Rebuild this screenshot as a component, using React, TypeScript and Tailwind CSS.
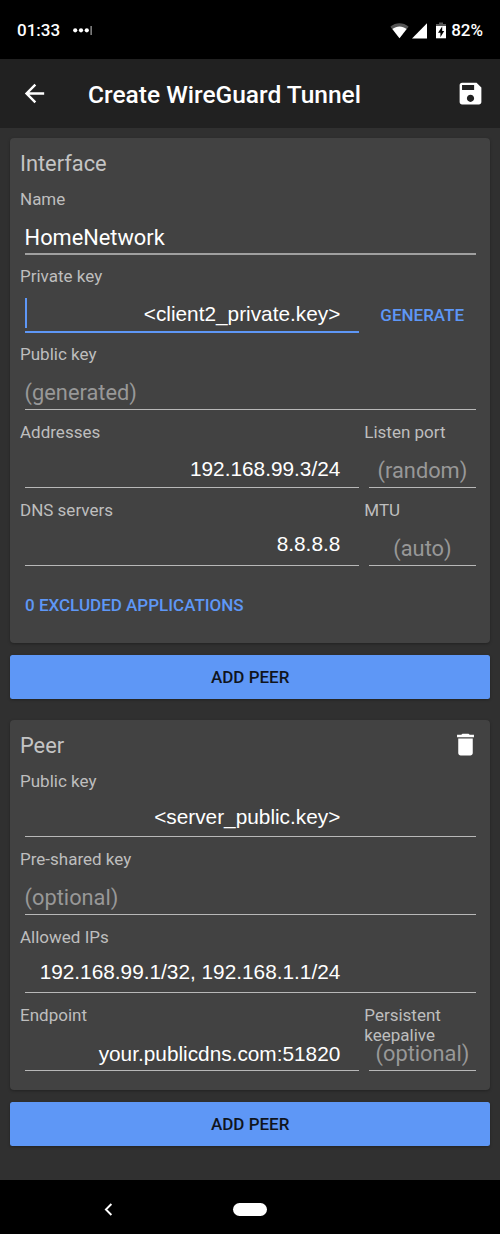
import type { ReactNode } from 'react';

type FieldProps = {
  label: string;
  value?: string;
  hint?: string;
  // Tailwind classes that place the text inside the input box
  text?: string;
  className?: string;
  // Tailwind classes of the underline
  line?: string;
  focused?: boolean;
};

function Field({
  label,
  value,
  hint,
  text = '',
  className = 'w-full',
  line = 'h-[46px] border-b border-[#b8b8b8]',
  focused = false,
}: FieldProps) {
  return (
    <div className={`h-[77.8px] shrink-0 ${className}`}>
      <div className="h-5 text-[17px] leading-5 text-[#bebebe]">{label}</div>
      <div className={`relative mr-[4.5px] ml-[4.6px] flex items-end leading-[26px] whitespace-pre ${line}`}>
        {focused && <span className="absolute bottom-[3px] left-0 h-[30px] w-[2.5px] bg-[#5e97f6]" />}
        <span className={`w-full ${hint ? 'text-[21.8px] text-[#989898]' : 'text-white'} ${text}`}>{value ?? hint}</span>
      </div>
    </div>
  );
}

const typed = "font-['Liberation_Sans',sans-serif] text-[20.8px] text-right";

function Card({ children, className }: { children: ReactNode; className: string }) {
  return (
    <section className={`mx-[10px] rounded-[4px] bg-[#424242] px-[10px] shadow-[0_1px_3px_rgba(0,0,0,0.3)] ${className}`}>
      {children}
    </section>
  );
}

function AddPeer({ className }: { className: string }) {
  return (
    <button
      className={`mx-[10px] block h-[44px] w-[480.4px] shrink-0 rounded-[2.5px] bg-[#5e97f6] pt-[2px] text-center text-[17px] font-medium text-[#10151d] shadow-[0_1px_3px_rgba(0,0,0,0.3)] ${className}`}
    >
      ADD PEER
    </button>
  );
}

export default function App() {
  return (
    <div className="flex h-[1234px] w-[500px] flex-col overflow-hidden bg-[#303030] font-[Roboto,sans-serif]">
      <div className="flex h-[59px] shrink-0 items-center bg-black pt-[2px] pr-[17px] pl-[17px] text-[17px] font-medium text-white">
        <span>01:33</span>
        <svg className="ml-[13px]" width="20" height="12" viewBox="0 0 20 12" fill="#fff">
          <circle cx="2.2" cy="5.3" r="2.1" />
          <circle cx="8" cy="5.3" r="2.1" />
          <circle cx="13.8" cy="5.3" r="2.1" />
          <path d="M17.6 1h1v9h-1z" opacity=".8" />
        </svg>
        <div className="ml-auto flex items-center">
          <svg width="19" height="16" viewBox="0 0 19 16">
            <path d="M.4 3.8C5.8-.8 13.2-.8 18.6 3.8L9.5 15.2z" fill="#555" />
            <path d="M2.4 6.1c4.2-3.6 10-3.6 14.2 0L9.5 15.2z" fill="#fff" />
          </svg>
          <svg className="ml-[3px]" width="15" height="16" viewBox="0 0 15 16">
            <path d="M15 .3v15.2H0z" fill="#fff" />
          </svg>
          <svg className="ml-[9px]" width="10" height="17" viewBox="0 0 10 17">
            <path d="M3 .5h4v1.6h3V5H0V2.1h3z" fill="#555" />
            <path d="M0 4h10v12.3H0z" fill="#fff" />
            <path d="M6.2 4.6 2 10.7h2.4v4.6L8.2 9H6.2z" fill="#000" />
          </svg>
          <span className="ml-[5px]">82%</span>
        </div>
      </div>

      <header className="flex h-[68.5px] shrink-0 items-center bg-[#212121] pr-[15px] pl-[20px] text-white">
        <svg width="29" height="29" viewBox="0 0 24 24" fill="currentColor">
          <path d="M20 11H7.83l5.59-5.59L12 4l-8 8 8 8 1.41-1.41L7.83 13H20v-2z" />
        </svg>
        <h1 className="ml-[39px] pt-[4px] text-[24.5px] font-medium whitespace-nowrap">Create WireGuard Tunnel</h1>
        <svg className="ml-auto" width="29" height="29" viewBox="0 0 24 24" fill="currentColor">
          <path d="M17 3H5c-1.11 0-2 .9-2 2v14c0 1.1.89 2 2 2h14c1.1 0 2-.9 2-2V7l-4-4zm-5 16c-1.66 0-3-1.34-3-3s1.34-3 3-3 3 1.34 3 3-1.34 3-3 3zm3-10H5V5h10v4z" />
        </svg>
      </header>

      <main className="flex h-[1052.5px] shrink-0 flex-col">
        <Card className="mt-[10px] h-[505.5px] shrink-0 pt-[12px]">
          <h2 className="h-[39.1px] pt-px text-[21.8px] leading-[26px] text-[#c4c4c4]">Interface</h2>
          <Field
            label="Name"
            value="HomeNetwork"
            text="text-[21.8px] pb-[2px]"
            line="h-[46px] border-b-2 border-[#a0a0a0]"
          />
          <div className="flex">
            <Field
              label="Private key"
              value="<client2_private.key>"
              text={`${typed} pr-[19px] pb-[4px]`}
              className="w-[343.8px]"
              line="h-[46.5px] border-b-2 border-[#5e97f6]"
              focused
            />
            <button className="mt-[38.6px] ml-[16.5px] h-[20px] text-[17px] leading-[20px] font-medium text-[#5e97f6]">
              GENERATE
            </button>
          </div>
          <Field label="Public key" hint="(generated)" text="pb-[3px]" />
          <div className="flex">
            <Field label="Addresses" value="192.168.99.3/24" text={`${typed} pr-[19px] pb-[5px]`} className="w-[343.8px]" />
            <Field label="Listen port" hint="(random)" text="text-center pb-[3px]" className="ml-[0.5px] w-[116.2px]" />
          </div>
          <div className="flex">
            <Field label="DNS servers" value="8.8.8.8" text={`${typed} pr-[19px] pb-[8px]`} className="w-[343.8px]" />
            <Field label="MTU" hint="(auto)" text="text-center pb-[3px]" className="ml-[0.5px] w-[116.2px]" />
          </div>
          <button className="mt-[17.4px] ml-[5px] block h-[20px] text-[17px] leading-[20px] font-medium whitespace-nowrap text-[#5e97f6]">
            0 EXCLUDED APPLICATIONS
          </button>
        </Card>

        <AddPeer className="mt-[12px]" />

        <Card className="mt-[21px] h-[370px] shrink-0 pt-[12px]">
          <div className="flex h-[39.2px] items-start justify-between">
            <h2 className="pt-px text-[21.8px] leading-[26px] text-[#c4c4c4]">Peer</h2>
            <svg className="-mt-[2px]" width="29" height="29" viewBox="0 0 24 24" fill="#fff">
              <path d="M6 19c0 1.1.9 2 2 2h8c1.1 0 2-.9 2-2V7H6v12zM19 4h-3.5l-1-1h-5l-1 1H5v2h14V4z" />
            </svg>
          </div>
          <Field label="Public key" value="<server_public.key>" text={`${typed} pr-[135.2px] pb-[6px]`} />
          <Field label="Pre-shared key" hint="(optional)" text="pb-[3px]" />
          <Field
            label="Allowed IPs"
            value="192.168.99.1/32, 192.168.1.1/24"
            text={`${typed} pr-[135.2px] pb-[7px]`}
          />
          <div className="flex">
            <Field
              label="Endpoint"
              value="your.publicdns.com:51820"
              text={`${typed} pr-[19px] pb-[3px]`}
              className="w-[343.8px]"
            />
            <Field label="Persistent keepalive" hint="(optional)" text="text-center pb-[3px]" className="ml-[0.5px] w-[116.2px]" />
          </div>
        </Card>

        <AddPeer className="mt-[12px]" />
      </main>

      <nav className="flex h-[54px] shrink-0 items-center bg-black pt-[5px] pl-[104px]">
        <svg width="9" height="13" viewBox="0 0 9 13" fill="none" stroke="#fff" strokeWidth="1.9">
          <path d="M7.4 1 1.9 6.5 7.4 12" />
        </svg>
        <span className="ml-[120px] h-[12.5px] w-[34px] rounded-full bg-white" />
      </nav>
    </div>
  );
}
